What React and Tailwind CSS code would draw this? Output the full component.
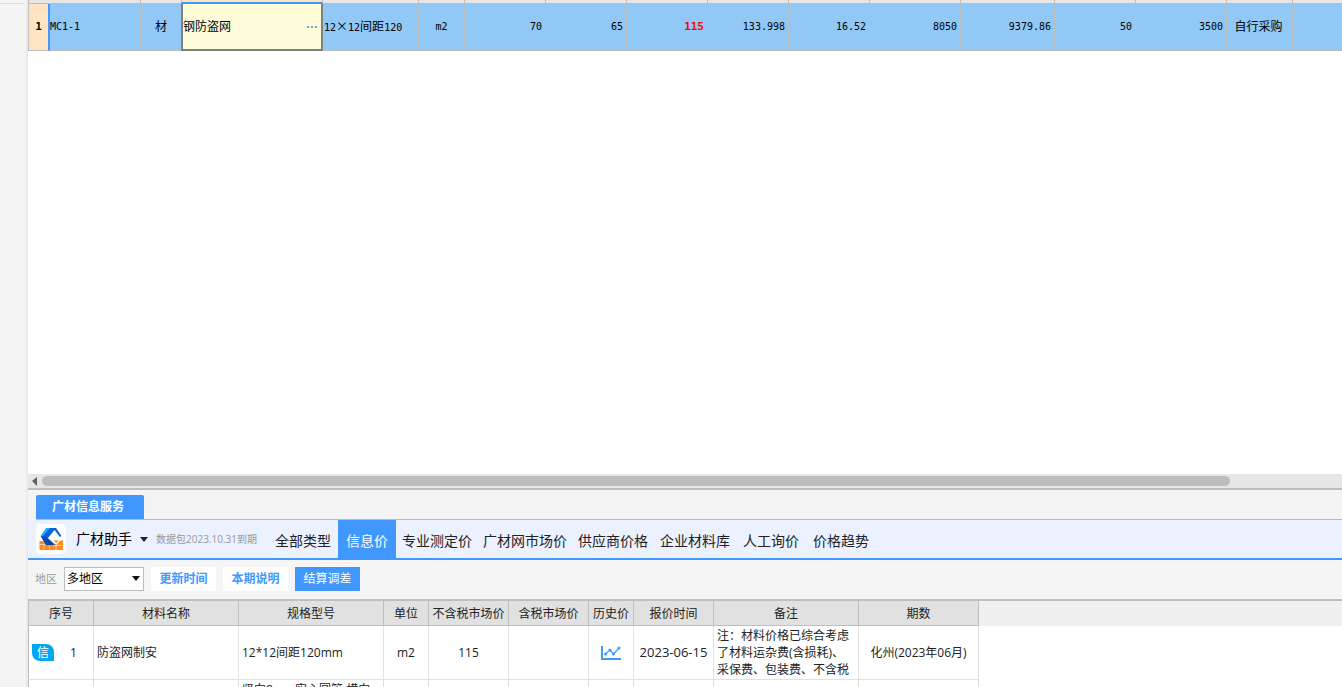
const priceCells = [
  { text: "70", width: "w-[81px]" },
  { text: "65", width: "w-[81px]" },
  { text: "115", width: "w-[81px]", alert: true },
  { text: "133.998", width: "w-[81px]" },
  { text: "16.52", width: "w-[81px]" },
  { text: "8050", width: "w-[91px]" },
  { text: "9379.86", width: "w-[94px]" },
  { text: "50", width: "w-[81px]" },
  { text: "3500", width: "w-[91px]" },
];

const navItems = [
  { text: "全部类型", width: "w-[70px]" },
  { text: "信息价", width: "w-[58px]", active: true },
  { text: "专业测定价", width: "w-[82px]" },
  { text: "广材网市场价", width: "w-[94px]" },
  { text: "供应商价格", width: "w-[82px]" },
  { text: "企业材料库", width: "w-[82px]" },
  { text: "人工询价", width: "w-[70px]" },
  { text: "价格趋势", width: "w-[70px]" },
];

const columns = [
  { title: "序号", width: "w-[66px]" },
  { title: "材料名称", width: "w-[145px]" },
  { title: "规格型号", width: "w-[145px]" },
  { title: "单位", width: "w-[45px]" },
  { title: "不含税市场价", width: "w-[80px]" },
  { title: "含税市场价", width: "w-[80px]" },
  { title: "历史价", width: "w-[45px]" },
  { title: "报价时间", width: "w-[80px]" },
  { title: "备注", width: "w-[145px]" },
  { title: "期数", width: "w-[120px]" },
];

function Logo() {
  return (
    <svg viewBox="0 0 30 30" className="w-[30px] h-[30px] shrink-0">
      <rect width="30" height="30" rx="4" fill="#fff" />
      <path d="M3.500 17h9v9h-9zM12 21h15v5H12zM17 16.500h10V22h-7z" fill="#ff8a1e" />
      <path d="M3.500 20.500h8M17 21.500h10M8 20.500V26M13.500 22v4M20 21.500V26" stroke="#fff" strokeWidth="0.500" />
      <path d="M10 4h6l-6 10-5.500-2z" fill="#1fb0f6" />
      <path d="M14 4h6l5.500 8-1.500 1-5.500-7L12 14l-6-1z" fill="#0b62d6" />
      <path d="M4.500 12l6 1 9 8H10z" fill="#0a47b0" />
      <path d="M17 17l3.500 3 3.500-4" fill="none" stroke="#fff" strokeWidth="1.200" />
    </svg>
  );
}

function InfoBadge() {
  return (
    <span className="flex items-center justify-center w-[22px] h-[17px] rounded-tr-lg rounded-bl-lg bg-[#00a8f3] text-white text-xs leading-none">
      信
    </span>
  );
}

function TrendIcon() {
  return (
    <svg viewBox="0 0 20 14" className="w-5 h-3.5 mx-auto" fill="none" stroke="#4098ff">
      <path d="M1 0v13h19" strokeWidth="2" />
      <path d="M4.500 8L9 4l3.500 4L18 2" strokeWidth="1.200" />
      <g fill="#4098ff" stroke="none">
        <circle cx="4.500" cy="8" r="1.500" />
        <circle cx="9" cy="4" r="1.500" />
        <circle cx="12.500" cy="8" r="1.500" />
        <circle cx="18" cy="2" r="1.500" />
      </g>
    </svg>
  );
}

function MaterialGrid() {
  return (
    <div className="h-[474px] shrink-0 overflow-hidden bg-white">
      <table className="table-fixed border-separate border-spacing-0 w-[1380px] text-[10px] leading-4 text-black font-['DejaVu_Sans_Mono','Noto_Sans_CJK_SC',monospace]">
        <thead>
          <tr className="h-1 bg-[#e6e6e6]">
            <th className="w-[22px] p-0 border-b border-l border-[#bdbdbd]"></th>
            <th className="w-[91px] p-0 border-b border-r border-[#bdbdbd]"></th>
            <th className="w-10 p-0 border-b border-[#bdbdbd]"></th>
            <th className="w-[142px] p-0 border-b-2 border-l border-r border-x-[#bdbdbd] border-b-[#4098ff] bg-[#ffe4c4]"></th>
            <th className="w-24 p-0 border-b border-r border-[#bdbdbd]"></th>
            <th className="w-[46px] p-0 border-b border-r border-[#bdbdbd]"></th>
            {priceCells.map((cell, i) => (
              <th key={i} className={`${cell.width} p-0 border-b border-r border-[#bdbdbd]`}></th>
            ))}
            <th className="w-[66px] p-0 border-b border-r border-[#bdbdbd]"></th>
            <th className="p-0 border-b border-[#bdbdbd]"></th>
          </tr>
        </thead>
        <tbody>
          <tr className="h-[47px] bg-[#91c8f6]">
            <td className="p-0 border-l border-b border-r-2 border-l-[#bdbdbd] border-b-[#bdbdbd] border-r-[#4098ff] bg-[#ffe4c4] text-center text-[11px] font-bold">1</td>
            <td className="p-0 border-b border-r border-[#bdbdbd]">MC1-1</td>
            <td className="p-0 border-b border-[#bdbdbd] text-center text-xs">材</td>
            <td className="p-0 border-l-2 border-r-2 border-b-2 border-[#808080] bg-[#fffcd9]">
              <div className="flex items-center justify-between pr-1 text-xs">
                <span>钢防盗网</span>
                <button aria-label="更多" className="flex gap-0.5">
                  <i className="size-0.5 bg-[#5fa4d0]"></i>
                  <i className="size-0.5 bg-[#5fa4d0]"></i>
                  <i className="size-0.5 bg-[#5fa4d0]"></i>
                </button>
              </div>
            </td>
            <td className="py-0 pl-px pr-0 border-b border-r border-[#bdbdbd] whitespace-nowrap">
              12<span className="text-xs font-['Noto_Sans_CJK_SC',sans-serif]">×</span>12<span className="text-xs">间距</span>120
            </td>
            <td className="p-0 border-b border-r border-[#bdbdbd] text-center">m2</td>
            {priceCells.map((cell, i) => (
              <td
                key={i}
                className={`py-0 pl-0 pr-[3px] border-b border-r border-[#bdbdbd] text-right ${cell.alert ? "text-[11px] font-bold text-[#ff0000]" : ""}`}
              >
                {cell.text}
              </td>
            ))}
            <td className="py-0 pl-0 pr-0.5 border-b border-r border-[#bdbdbd] text-center text-xs">自行采购</td>
            <td className="p-0 border-b border-[#bdbdbd]"></td>
          </tr>
        </tbody>
      </table>
    </div>
  );
}

function PriceTable() {
  return (
    <div className="flex items-start flex-1 min-h-0 overflow-hidden bg-white border-t-2 border-[#bfbfbf]">
      <table className="table-fixed border-separate border-spacing-0 w-[951px] shrink-0 text-xs leading-[17px] text-[#222]">
        <thead>
          <tr className="h-[25px] bg-[#e1e1e1]">
            {columns.map((col) => (
              <th key={col.title} className={`${col.width} p-0 font-normal border-r border-b border-[#bfbfbf] first:border-l whitespace-nowrap`}>
                {col.title}
              </th>
            ))}
          </tr>
        </thead>
        <tbody className="[&_td]:border-r [&_td]:border-b [&_td]:border-[#e1e1e1] [&_td]:py-0 [&_td:first-child]:border-l [&_td:first-child]:border-l-[#bfbfbf]">
          <tr className="h-[54px]">
            <td className="px-[3px]">
              <div className="flex items-center gap-4">
                <InfoBadge />
                <span>1</span>
              </div>
            </td>
            <td className="px-[3px]">防盗网制安</td>
            <td className="px-[3px]">12*12间距120mm</td>
            <td className="text-center">m2</td>
            <td className="text-center">115</td>
            <td></td>
            <td><TrendIcon /></td>
            <td className="text-center text-[13px]">2023-06-15</td>
            <td className="px-[3px]">注：材料价格已综合考虑了材料运杂费(含损耗)、采保费、包装费、不含税</td>
            <td className="text-center">化州(2023年06月)</td>
          </tr>
          <tr className="h-[54px]">
            <td></td>
            <td></td>
            <td className="px-[3px] whitespace-nowrap">
              竖向8mm实心圆管,横向
              <br />
              扁钢
              <br />
              防盗网
            </td>
            <td></td>
            <td></td>
            <td></td>
            <td></td>
            <td></td>
            <td></td>
            <td></td>
          </tr>
        </tbody>
      </table>
      <div className="flex-1 h-[25px] bg-[#f0f0f0]"></div>
    </div>
  );
}

export default function App() {
  return (
    <div className="flex h-screen overflow-hidden bg-[#f4f4f4] font-['Open_Sans','Noto_Sans_CJK_SC',sans-serif]">
      <aside className="w-7 shrink-0 border-r-2 border-[#ebebeb]">
        <div className="h-1 w-6 border-b border-[#dedede]"></div>
      </aside>

      <main className="flex flex-col flex-1 min-w-0">
        <MaterialGrid />

        <div className="flex items-center h-4 shrink-0 pr-28 bg-[#e6e6e6] border-b-2 border-[#bdbdbd]">
          <svg viewBox="0 0 14 14" className="size-3.5" fill="#606060">
            <path d="M9 3v9L4 7z" />
          </svg>
          <div className="flex-1 h-2.5 rounded-full bg-[#bdbdbd]"></div>
        </div>

        <div className="pt-[5px] pl-2 shrink-0">
          <div className="flex border-b border-[#bdbdbd]">
            <button className="w-[108px] h-6 rounded-t-xs bg-[#4098ff] text-white text-xs font-bold pr-1">
              广材信息服务
            </button>
          </div>
        </div>

        <header className="flex items-center h-10 shrink-0 pl-2 bg-[#ebf1ff] border-b-2 border-[#4098ff]">
          <Logo />
          <button className="flex items-center gap-2 ml-2.5 text-sm text-black">
            广材助手
            <svg viewBox="0 0 8 5" className="w-2 h-[5px]" fill="#222">
              <path d="M0 0h8L4 5z" />
            </svg>
          </button>
          <span className="w-28 ml-2 text-[10px] text-[#999] whitespace-nowrap">数据包2023.10.31到期</span>
          <nav className="flex h-full">
            {navItems.map((item) => (
              <button
                key={item.text}
                className={`${item.width} h-full pt-1 text-sm whitespace-nowrap ${item.active ? "bg-[#4098ff] text-white" : "text-[#222]"}`}
              >
                {item.text}
              </button>
            ))}
          </nav>
        </header>

        <div className="flex items-center gap-[7px] h-[39px] shrink-0 pl-[7px] pb-px bg-[#f5f5f5] text-xs">
          <label htmlFor="region" className="text-[11px] text-[#999]">地区</label>
          <div className="relative">
            <select id="region" className="block appearance-none w-20 h-6 pl-0.5 border border-[#bdbdbd] bg-white text-black">
              <option>多地区</option>
            </select>
            <svg viewBox="0 0 8 5" className="absolute right-1 top-[9px] w-2 h-[5px] pointer-events-none" fill="#111">
              <path d="M0 0h8L4 5z" />
            </svg>
          </div>
          <button className="w-[65px] h-6 bg-white text-[#4098ff] font-bold">更新时间</button>
          <button className="w-[65px] h-6 bg-white text-[#4098ff] font-bold">本期说明</button>
          <button className="w-[65px] h-6 bg-[#4098ff] text-white">结算调差</button>
        </div>

        <PriceTable />
      </main>
    </div>
  );
}
